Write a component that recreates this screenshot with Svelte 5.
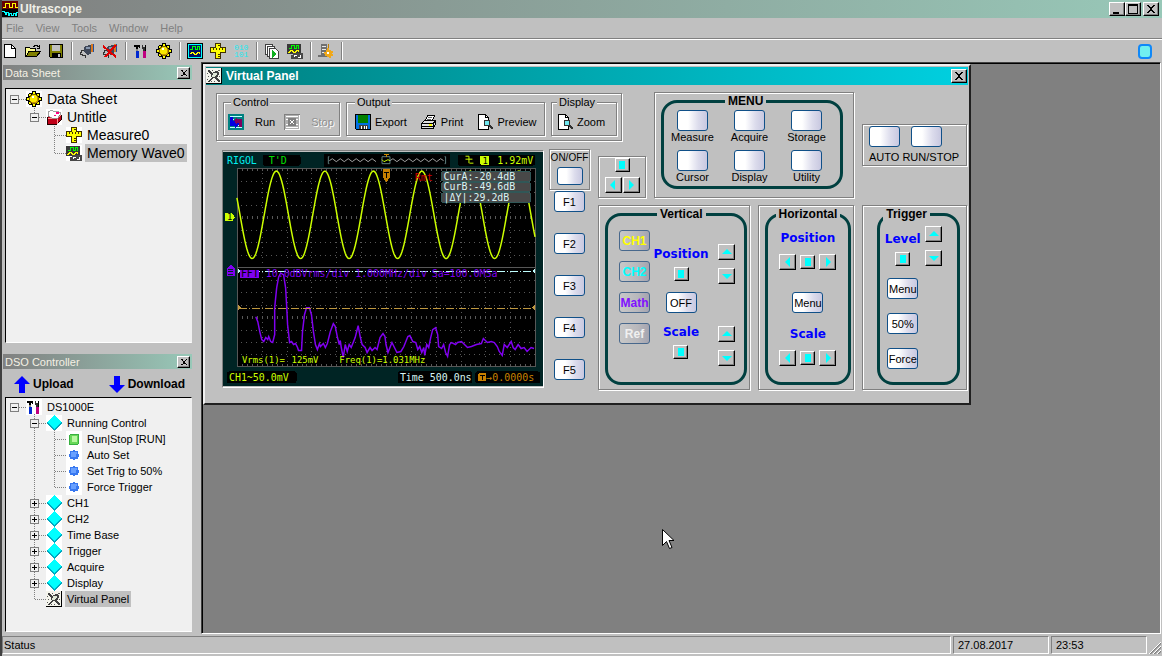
<script>
	const menus = ['File', 'View', 'Tools', 'Window', 'Help'];

	const toolGroups = [
		['new', 'open', 'save'],
		['connect', 'disconnect'],
		['tools', 'sun'],
		['wave', 'ruler', 'binary'],
		['copies', 'memory'],
		['config']
	];

	// guide holds one character per tree column, the last one is the junction
	const dataTree = [
		{ guide: 'o', box: '-', icon: 'sun', label: 'Data Sheet' },
		{ guide: ' └', box: '-', icon: 'book', label: 'Untitle' },
		{ guide: '  ├', icon: 'ruler', label: 'Measure0' },
		{ guide: '  └', icon: 'memory', label: 'Memory Wave0', selected: true }
	];

	const controlTree = [
		{ guide: 'o', box: '-', icon: 'tools', label: 'DS1000E' },
		{ guide: ' ├', box: '-', icon: 'diamond', label: 'Running Control' },
		{ guide: ' │├', icon: 'run', label: 'Run|Stop [RUN]' },
		{ guide: ' │├', icon: 'dot', label: 'Auto Set' },
		{ guide: ' │├', icon: 'dot', label: 'Set Trig to 50%' },
		{ guide: ' │└', icon: 'dot', label: 'Force Trigger' },
		{ guide: ' ├', box: '+', icon: 'diamond', label: 'CH1' },
		{ guide: ' ├', box: '+', icon: 'diamond', label: 'CH2' },
		{ guide: ' ├', box: '+', icon: 'diamond', label: 'Time Base' },
		{ guide: ' ├', box: '+', icon: 'diamond', label: 'Trigger' },
		{ guide: ' ├', box: '+', icon: 'diamond', label: 'Acquire' },
		{ guide: ' ├', box: '+', icon: 'diamond', label: 'Display' },
		{ guide: ' └', icon: 'panel', label: 'Virtual Panel', selected: true }
	];

	const menuKeys = ['Measure', 'Acquire', 'Storage', 'Cursor', 'Display', 'Utility'];
	const channels = [
		{ label: 'CH1', kind: 'ch1' },
		{ label: 'CH2', kind: 'ch2' },
		{ label: 'Math', kind: 'math' },
		{ label: 'Ref', kind: 'ref' }
	];
	const cursors = ['CurA:-20.4dB', 'CurB:-49.6dB', '|ΔY|:29.2dB'];

	const rows = [1, 2, 3, 5, 6, 7, 9, 10, 11, 13, 14, 15].map((n) => 16 + n * 12.5);
	const cols = Array.from({ length: 11 }, (_, i) => 14 + (i + 1) * 25);

	let sine = '';
	for (let x = 14; x <= 314; x++) {
		const y = 63.5 - 44 * Math.cos((2 * Math.PI * (x - 53.7)) / 48.8);
		sine += `${x},${y.toFixed(1)} `;
	}

	const fft =
		'33,166 35,171 37,181 39,189 41,191 43,187 45,189 46,186 48,191 50,192 52,184 52,157 54,137 56,126 58,122 61,124 63,137 64,154 65,174 67,192 69,191 71,194 73,193 75,197 76,200 79,200 80,181 82,164 84,157 87,157 89,164 91,181 93,194 95,199 97,193 98,196 101,193 103,197 105,193 108,181 111,173 113,176 115,186 117,194 118,190 119,197 121,207 123,194 125,201 127,194 129,197 133,187 135,179 136,175 138,186 140,194 143,197 145,202 148,197 150,200 153,197 155,199 158,187 161,183 163,186 164,194 166,202 170,192 172,196 175,202 179,201 182,196 184,191 186,186 188,185 191,191 194,192 196,199 198,196 200,202 202,197 203,205 205,194 207,197 209,187 211,179 214,177 216,184 217,196 220,198 222,194 224,202 226,206 228,194 230,192 234,194 236,192 240,191 243,194 246,197 250,196 255,194 260,193 262,188 266,192 270,191 273,192 276,196 278,201 281,205 283,194 286,197 290,191 292,197 294,199 297,194 300,198 303,197 306,201 310,197 313,198';
</script>

{#snippet icon(name)}
	<svg class="icon" viewBox="0 0 16 16" aria-hidden="true">
		{#if name === 'app'}
			<rect width="16" height="8" fill="#600" />
			<rect y="8" width="16" height="8" fill="#000" />
			<path d="M1 6.500h2v-4h4v4h3v-4h3v4h3" fill="none" stroke="#ff0" />
			<path d="M0 10.500h2v1h1v2h1v-2h2v3h1v-2h2v2h2v-2h2v2h1v-3h2" fill="none" stroke="#0ff" />
		{:else if name === 'new'}
			<path d="M2.500 1.500h7l4 4v9h-11z" fill="#fff" stroke="#000" />
			<path d="M9.500 1.500v4h4" fill="none" stroke="#000" />
		{:else if name === 'open'}
			<path d="M0.500 13.500v-9h4l1 1h5v3" fill="#ffff90" stroke="#000" />
			<path d="M1 13.500l3-5h11.500l-4 5z" fill="#808000" stroke="#000" />
			<path d="M8 3.500h1v-1h3v1h2v1M14.500 2v4M12 5.500h3" fill="none" stroke="#000" />
		{:else if name === 'save'}
			<path d="M1.500 1.500h13v13h-12l-1-1z" fill="#808000" stroke="#000" />
			<rect x="4" y="2" width="8" height="6" fill="#c0c0c0" />
			<rect x="4" y="10" width="9" height="4" fill="#000" />
			<rect x="10" y="11" width="2" height="3" fill="#c0c0c0" />
		{:else if name === 'connect' || name === 'disconnect'}
			<path d="M5 4l5-2h2v9l-4 1-3-3z" fill="#404858" />
			<path d="M7 4h4v2h-4z" fill="#8898b0" />
			<rect x="12" y="1" width="2" height="8" fill="#d87820" />
			<rect x="14" y="1" width="1" height="8" fill="#2050a0" />
			<path d="M5 7.500h-3v2h-1v2h2v1h3v2" fill="none" stroke="#333" />
			{#if name === 'disconnect'}
				<path d="M1 3l13 11M14 2L3 14" stroke="#e00000" stroke-width="2" />
			{/if}
		{:else if name === 'tools'}
			<path d="M1 4v-2h6v3h-1v-1h-1v3h-2v-3z" fill="#000" />
			<rect x="3" y="6" width="2" height="3" fill="#888" />
			<rect x="3" y="8" width="3" height="7" fill="#0028d0" />
			<path d="M9 2h1v2h2v-2h1v3l-1 2v2h-2v-2l-1-2z" fill="#303030" />
			<rect x="10" y="8" width="3" height="7" fill="#c00080" />
			<rect x="12" y="2" width="1" height="6" fill="#000" />
		{:else if name === 'sun'}
			<path d="M6 0h4v2h3l1 1v3h2v4h-2v3l-1 1h-3v2h-4v-2h-3l-1-1v-3h-2v-4h2v-3l1-1h3z" fill="#000" />
			<path
				d="M7 1h2v3h-2zM7 12h2v3h-2zM1 7h3v2h-3zM12 7h3v2h-3zM3 3h2v2h-2zM11 3h2v2h-2zM3 11h2v2h-2zM11 11h2v2h-2z"
				fill="#ff0"
			/>
			<circle cx="8" cy="8" r="4.500" fill="#f8e800" stroke="#806000" />
			<path d="M5 11h5v-1h1v-4h1v4l-2 2h-4z" fill="#c89800" />
			<rect x="6" y="5" width="2" height="2" fill="#fff" />
		{:else if name === 'wave'}
			<rect x="0.500" y="0.500" width="15" height="15" fill="#0ff" stroke="#000" />
			<rect x="2" y="2" width="12" height="12" fill="#001060" />
			<path d="M3 6.500h2v-3h3v3h2v-3h2v3h1" fill="none" stroke="#0f0" />
			<path d="M3 10.500h1v-1h2v1h1v1h2v-1h1v-1h2v1h1" fill="none" stroke="#ff0" />
		{:else if name === 'ruler'}
			<path d="M5 0h6v4h5v6h-5v6h-6v-6h-5v-6h5z" fill="#403000" />
			<path d="M6 1h4v4h5v4h-5v6h-4v-6h-5v-4h5z" fill="#ff0" />
			<path d="M3.500 5v2M6.500 5v2M9.500 5v2M12.500 5v2M8 2.500h2M8 11.500h2M8 13.500h2" stroke="#403000" />
		{:else if name === 'binary'}
			<g class="bits">
				<text x="1" y="7">010</text>
				<text x="1" y="14">101</text>
			</g>
		{:else if name === 'copies'}
			<path d="M1.500 1.500h7v10h-7z" fill="#fff" stroke="#404040" />
			<path d="M3.500 3.500h7v10h-7z" fill="#fff" stroke="#404040" />
			<path d="M5.500 5.500h6l3 3v7h-9z" fill="#fff" stroke="#404040" />
			<path d="M8 7l5 4-5 4z" fill="#10b020" />
		{:else if name === 'memory'}
			<rect x="0" y="1" width="14" height="10" fill="#383838" />
			<path d="M2 5.500h2v-3h3v3h2v-3h2v3h1" fill="none" stroke="#0f0" />
			<path d="M1 9.500h1v-1h1v-1h2v1h1v1h2v-1h1v-1h2v1h1" fill="none" stroke="#ff0" />
			<path d="M6 10h10v6H4v-4h2z" fill="#484848" />
			<path d="M7.500 14v-2h2M11 14.500h2v-3" fill="none" stroke="#fff" />
		{:else if name === 'config'}
			<path d="M3 1h6v11h-6z" fill="#707070" />
			<path d="M4 3.500h4M4 6.500h4M4 9.500h3" stroke="#e8e8e8" />
			<path d="M0 12h9v2h-9z" fill="#707070" />
			<path d="M9 5h2v2h2v1h2v2h-1v1h1v2h-2v2h-2v-1h-2v-1h-2v-2h-1v-2h2v-2h1z" fill="#f0a818" />
			<rect x="9" y="9" width="2" height="2" fill="#fff" />
			<path d="M10.500 1v4" stroke="#c08000" />
		{:else if name === 'book'}
			<path d="M1 9l3-3h11v5l-4 4h-10z" fill="#c00018" stroke="#200" />
			<path d="M2 9.500h9l4-3M11.500 10v5" stroke="#ff9090" fill="none" />
			<path d="M2 3l4-2 2 2 3-1 4 2-3 5h-6l-4-2z" fill="#fff" stroke="#888" stroke-width="0.800" />
			<path d="M10 3h3v2h-3zM8 6h2v1h-2z" fill="#ff0080" />
		{:else if name === 'diamond'}
			<path d="M8 0l8 8-8 8-8-8z" fill="#00a8c0" />
			<path d="M8 0l7 7-7 7-7-7z" fill="#0ff" />
		{:else if name === 'run'}
			<rect x="3" y="3" width="10" height="11" rx="2" fill="#38b040" />
			<rect x="4" y="4" width="8" height="9" rx="1" fill="#68d858" />
			<rect x="6" y="5" width="5" height="6" fill="#b8f8a0" />
		{:else if name === 'dot'}
			<path d="M7 3h2v1h3v3h1v3h-1v2h-3v1h-2v-1h-3v-2h-1v-3h1v-3h3z" fill="#3878f0" />
			<path d="M5 5h6v2h-1v3h-5z" fill="#68a0ff" />
		{:else if name === 'panel'}
			<rect width="16" height="16" fill="#f4f4ec" />
			<path d="M0 15.500h15.500v-15.500" fill="none" stroke="#000" />
			<path
				d="M2 2h2v1h1v1h1v1h1v-1h2v-1h3v1h1v3h-1v2h-1v1h1v1h1v1h1v2h-2v-1h-1v-1h-1v-1h-1v-1h-2v1h-1v1h-1v1h-1v1h-2v-1h1v-1h1v-1h1v-1h1v-1h-1v-3h-1v-1h-1v-1h-1z"
				fill="#404040"
			/>
			<path d="M6 7h1v-2h4v2h-1v1h-1v1h-3z" fill="#e0e8d8" />
			<path d="M12 2.500h2M2 8.500h1M1 11.500h1M13 8.500h1M5 13.500h1M8 13.500h1M6 2.500h1M1 5.500h1" stroke="#585858" />
		{:else if name === 'start'}
			<rect width="16" height="16" fill="#008080" />
			<path d="M2 2.500h12M2 5.500h4M2 13.500h12M9 11.500h5" stroke="#c0ffff" />
			<path d="M2 3h3v4h2v-2l4 5-4 4v-2h-5z" fill="#0000e0" />
			<path d="M14 13h-3v-4h-2v2l-3-5 3-3v2h5z" fill="#800060" />
		{:else if name === 'stop'}
			<rect x="0.500" y="0.500" width="15" height="15" fill="#b0b0b0" stroke="#808080" />
			<path d="M2 2.500h12M2 5.500h12M2 10.500h12M2 13.500h12M15.500 1v15M1 15.500h15" stroke="#fff" />
			<rect x="4" y="4" width="8" height="8" fill="#808080" />
			<path d="M6 6h1v1h2v-1h1v1h-1v2h1v1h-1v-1h-2v1h-1v-1h1v-2h-1z" fill="#fff" />
		{:else if name === 'export'}
			<path d="M0.500 0.500h15v15h-14l-1-1z" fill="#0070e0" stroke="#000" />
			<rect x="3" y="1" width="10" height="8" fill="#008000" />
			<rect x="4" y="11" width="9" height="4" fill="#404040" />
			<path d="M6.500 12v3M9.500 12v3M11.500 12v3" stroke="#fff" />
		{:else if name === 'print'}
			<path d="M4.500 6.500l2-5h7l-2 5z" fill="#fff" stroke="#000" />
			<path d="M7 3.500h4M6 5.500h4" stroke="#606060" />
			<path d="M0.500 9.500l3-3h11v4l-3 4h-11z" fill="#e0e0e0" stroke="#000" />
			<path d="M1 9.500h11v5M12 9.500l3-3M1 12.500h11" fill="none" stroke="#000" />
			<rect x="8" y="10" width="3" height="2" fill="#ff0" />
		{:else if name === 'preview'}
			<path d="M1.500 0.500h7l3 3v12h-10z" fill="#fff" stroke="#000" />
			<path d="M8.500 0.500v3h3" fill="none" stroke="#000" />
			<circle cx="10" cy="9" r="3" fill="#70e8f0" stroke="#303030" />
			<path d="M12 11l4 4" stroke="#303030" stroke-width="2" />
		{:else if name === 'close'}
			<path d="M4 4h2v1h1v1h2v-1h1v-1h2v1h-1v1h-1v1h-1v2h1v1h1v1h1v1h-2v-1h-1v-1h-2v1h-1v1h-2v-1h1v-1h1v-1h1v-2h-1v-1h-1v-1h-1z" />
		{:else if name === 'max'}
			<path d="M3 3h10v10h-10zM4 5v7h8v-7z" fill-rule="evenodd" />
		{:else if name === 'min'}
			<path d="M4 11h6v2h-6z" />
		{/if}
	</svg>
{/snippet}

{#snippet tree(items, size)}
	<ul class="tree {size}">
		{#each items as item (item.label)}
			<li>
				{#each item.guide as cell, i}
					<svg class="guide" viewBox="0 0 20 18" aria-hidden="true">
						{#if cell === '│' || cell === '├'}<path class="dots" d="M8.500 0v18" />{/if}
						{#if cell === '└'}<path class="dots" d="M8.500 0v9" />{/if}
						{#if cell !== ' ' && cell !== '│'}<path class="dots" d="M9 9.500h11" />{/if}
						{#if item.box && i === item.guide.length - 1}
							<rect x="4.500" y="5.500" width="8" height="8" fill="#f0f0f0" stroke="#808080" />
							<path d="M6 9.500h5" stroke="#000" />
							{#if item.box === '+'}<path d="M8.500 7v5" stroke="#000" />{/if}
						{/if}
					</svg>
				{/each}
				<span class="tree-icon">{@render icon(item.icon)}</span>
				<button class="node" class:selected={item.selected}>{item.label}</button>
			</li>
		{/each}
	</ul>
{/snippet}

{#snippet arrow(dir)}
	<button class="arrow" class:square={dir === 'square'} aria-label={dir}>
		<svg viewBox="0 0 10 10" aria-hidden="true">
			{#if dir === 'up'}<path d="M0 7h10L5 2z" />
			{:else if dir === 'down'}<path d="M0 3h10L5 8z" />
			{:else if dir === 'left'}<path d="M7 0v10L2 5z" />
			{:else if dir === 'right'}<path d="M3 0v10l5-5z" />
			{:else}<path d="M2 1h6v8H2z" />{/if}
		</svg>
	</button>
{/snippet}

{#snippet dockHead(title)}
	<header class="dock-head">
		<span>{title}</span>
		<button class="win-btn small" aria-label="Close">{@render icon('close')}</button>
	</header>
{/snippet}

<div class="app">
	<header class="titlebar">
		{@render icon('app')}
		<span class="title">Ultrascope</span>
		<div class="win-btns">
			<button class="win-btn" aria-label="Minimize">{@render icon('min')}</button>
			<button class="win-btn" aria-label="Maximize">{@render icon('max')}</button>
		</div>
		<button class="win-btn" aria-label="Close">{@render icon('close')}</button>
	</header>

	<nav class="menubar">
		{#each menus as menu}
			<button disabled>{menu}</button>
		{/each}
	</nav>

	<div class="toolbar">
		{#each toolGroups as group}
			{#each group as tool}
				<button aria-label={tool}>{@render icon(tool)}</button>
			{/each}
			<span class="sep"></span>
		{/each}
		<span class="lamp"></span>
	</div>

	<main>
		<aside>
			<section class="dock">
				{@render dockHead('Data Sheet')}
				<div class="dock-gap"></div>
				{@render tree(dataTree, 'large')}
			</section>
			<section class="dock">
				{@render dockHead('DSO Controller')}
				<div class="transfer">
					<button>
						<svg viewBox="0 0 16 17" aria-hidden="true"><path d="M8 0l8 8h-5v9H5V8H0z" /></svg>
						Upload
					</button>
					<button>
						<svg viewBox="0 0 16 17" aria-hidden="true"><path d="M8 17l8-8h-5V0H5v9H0z" /></svg>
						Download
					</button>
				</div>
				{@render tree(controlTree, 'compact')}
			</section>
		</aside>

		<div class="mdi">
			<section class="window">
				<header class="window-title">
					{@render icon('panel')}
					<span class="title">Virtual Panel</span>
					<button class="win-btn" aria-label="Close">{@render icon('close')}</button>
				</header>

				<div class="panel">
					<div class="frame actions">
						<fieldset class="control">
							<legend>Control</legend>
							<button class="wide">{@render icon('start')}Run</button>
							<button class="wide" disabled>{@render icon('stop')}Stop</button>
						</fieldset>
						<fieldset class="output">
							<legend>Output</legend>
							<button>{@render icon('export')}Export</button>
							<button>{@render icon('print')}Print</button>
							<button>{@render icon('preview')}Preview</button>
						</fieldset>
						<fieldset class="display">
							<legend>Display</legend>
							<button>{@render icon('preview')}Zoom</button>
						</fieldset>
					</div>

					<div class="scope">
						<svg class="screen" viewBox="0 0 322 236" role="img" aria-label="Oscilloscope screen">
							<rect width="322" height="236" fill="#002424" />
							<rect x="40" y="3" width="38" height="11" rx="2" />
							<rect x="102" y="2" width="126" height="13" />
							<rect x="236" y="3" width="78" height="11" rx="2" />
							<rect x="4" y="221" width="70" height="12" rx="2" />
							<rect x="176" y="221" width="75" height="12" rx="2" />
							<rect x="254" y="221" width="65" height="12" rx="2" />

							<rect x="14.500" y="16.500" width="300" height="200" stroke="#585858" />
							<g stroke="#585858">
								{#each rows as y}
									<path d="M18 {Math.round(y) + 0.5}H314" stroke-dasharray="1 4" />
								{/each}
								{#each cols as x}
									<path d="M{x + 0.5} 16V216" stroke-dasharray="1 4" />
								{/each}
								<path d="M14 116.500H314" />
								<path d="M19 66.500H314M19 166.500H314" stroke-width="3" stroke-dasharray="1 4" />
								<path d="M19 18H314M19 215H314" stroke-dasharray="1 4" stroke-width="2" />
							</g>

							<polyline points={sine} class="trace" />
							<polyline points={fft} class="trace spectrum" />

							<path d="M16 120.500H313" stroke="#c0ffff" stroke-dasharray="8 2 1 2" />
							<path d="M16 157.500H313" stroke="#c09840" stroke-dasharray="8 2 1 2" />
							<path d="M15 117l3 3-3 3zM314 117l-3 3 3 3z" fill="#c0ffff" />
							<path d="M15 154l3 3-3 3zM314 154l-3 3 3 3z" fill="#c09840" />

							<text x="4" y="12" fill="#00f0f0">RIGOL</text>
							<text x="46" y="12" fill="#00e000">T'D</text>
							<path d="M107 5h-1v7h1M223 5h1v7h-1" class="thin" stroke="#608080" />
							<path
								d="M107 9l3-2 4 3 4-3 4 3 4-3 4 3 4-3 4 3 4-3 4 3 4-3 4 3M168 9l3-2 4 3 4-3 4 3 4-3 4 3 4-3 4 3 4-3 4 3 4-3 4 3 4-3 3 2"
								class="thin"
								stroke="#a0a0a0"
							/>
							<path d="M160 5h8v7h-8z" class="thin" stroke="#608080" />
							<path d="M160 8l2 2 4-2 2 1" class="thin" stroke="#cf0" />
							<path d="M162 2.500h5M164.500 2v3" stroke="#c80" />
							<path d="M244 4.500h3.500v7M244 7.500h7M248 11.500h4" class="thin" stroke="#cf0" />
							<rect x="259" y="4" width="9" height="9" rx="1" fill="#cf0" />
							<text x="261" y="12" class="small" fill="#000">1</text>
							<text x="276" y="12" fill="#cf0">1.92mV</text>

							<path d="M161 17h7v9l-3 4h-1l-3-4z" fill="#c88000" />
							<path d="M162 20.500h5M164.500 20v6" stroke="#000" />
							<text x="193" y="29" fill="#d00000">Rmt</text>
							{#each cursors as line, i}
								<rect x="219.500" y={19.5 + i * 11} width="90" height="10" rx="2" fill="#484848" stroke="#305858" />
								<text x="222" y={28 + i * 11} fill="#d8f4f4">{line}</text>
							{/each}

							<path d="M2 62h7l3 4-3 4H2z" fill="#cf0" />
							<text x="4" y="69" class="small" fill="#000">1</text>
							<path d="M4 125v-7l4-5 4 5v7z" fill="#8000f0" />
							<path d="M5 118.500h5M5 120.500h5M5 123.500h5" stroke="#002424" />

							<rect x="17" y="119" width="19" height="8" fill="#8000f0" />
							<text x="18" y="126" fill="#000">FFT</text>
							<g fill="#8000f0">
								<text x="43" y="126">10.0dBVrms/div</text>
								<text x="133" y="126">1.000MHz/div</text>
								<text x="210" y="126">Sa=100.0MSa</text>
							</g>
							<g class="small" fill="#cf0">
								<text x="19" y="213">Vrms(1)=</text>
								<text x="69" y="213">125mV</text>
								<text x="117" y="213">Freq(1)=1.031MHz</text>
							</g>
							<text x="6" y="231" fill="#cf0">CH1~50.0mV</text>
							<text x="178" y="231" fill="#d8f4f4">Time 500.0ns</text>
							<rect x="257" y="223" width="8" height="8" rx="1" fill="#c88000" />
							<path d="M259 225.500h5M261.500 225v5" stroke="#000" />
							<text x="265" y="231" fill="#c88000">→0.0000s</text>
						</svg>

						<div class="keys">
							<div class="frame onoff">
								ON/OFF
								<button class="key mini" aria-label="ON/OFF"></button>
							</div>
							<div class="fkeys">
								{#each ['F1', 'F2', 'F3', 'F4', 'F5'] as key}
									<button class="key">{key}</button>
								{/each}
							</div>
						</div>
					</div>

					<div class="frame pad">
						{@render arrow('square')}
						<div>{@render arrow('left')}{@render arrow('right')}</div>
					</div>

					<div class="frame group menu">
						<fieldset class="round">
							<legend>MENU</legend>
							{#each menuKeys as key}
								<label><button class="key"></button>{key}</label>
							{/each}
						</fieldset>
					</div>

					<div class="frame auto">
						<div>
							<button class="key" aria-label="AUTO"></button>
							<button class="key" aria-label="RUN/STOP"></button>
						</div>
						<span>AUTO RUN/STOP</span>
					</div>

					<div class="controls">
						<div class="frame group vertical">
							<fieldset class="round">
								<legend>Vertical</legend>
								<div class="channels">
									{#each channels as ch}
										<button class="key channel {ch.kind}">{ch.label}</button>
									{/each}
								</div>
								<div class="knobs">
									<div class="knob"><b>Position</b>{@render arrow('square')}</div>
									<button class="key">OFF</button>
									<div class="knob"><b>Scale</b>{@render arrow('square')}</div>
								</div>
								<div class="spinners">
									<div class="spinner">{@render arrow('up')}{@render arrow('down')}</div>
									<div class="spinner">{@render arrow('up')}{@render arrow('down')}</div>
								</div>
							</fieldset>
						</div>

						<div class="frame group horizontal">
							<fieldset class="round">
								<legend>Horizontal</legend>
								<b>Position</b>
								<div class="slider">{@render arrow('left')}{@render arrow('square')}{@render arrow('right')}</div>
								<button class="key">Menu</button>
								<b>Scale</b>
								<div class="slider">{@render arrow('left')}{@render arrow('square')}{@render arrow('right')}</div>
							</fieldset>
						</div>

						<div class="frame group trigger">
							<fieldset class="round">
								<legend>Trigger</legend>
								<div class="level">
									<div class="knob"><b>Level</b>{@render arrow('square')}</div>
									<div class="spinner">{@render arrow('up')}{@render arrow('down')}</div>
								</div>
								<div class="trigger-keys">
									<button class="key">Menu</button>
									<button class="key">50%</button>
									<button class="key">Force</button>
								</div>
							</fieldset>
						</div>
					</div>
				</div>
			</section>

			<svg class="pointer" viewBox="0 0 13 21" aria-hidden="true">
				<path d="M0.500 0.500v16l4-4 3 7 2.500-1-3-7h5z" fill="#fff" stroke="#000" />
			</svg>
		</div>
	</main>

	<footer class="statusbar">
		<span class="status">Status</span>
		<span class="cell">27.08.2017</span>
		<span class="cell">23:53</span>
		<svg class="grip" viewBox="0 0 12 12" aria-hidden="true">
			<path d="M1 12L12 1M5 12l7-7M9 12l3-3" stroke="#808080" stroke-width="1.500" />
			<path d="M0 12L12 0M4 12l8-8M8 12l4-4" stroke="#fff" />
		</svg>
	</footer>
</div>

<style>
	:global(body) {
		background: #c0c0c0;
	}

	.app {
		display: flex;
		flex-direction: column;
		height: 100vh;
		box-sizing: border-box;
		border-left: 2px solid #404040;
		background: #c0c0c0;
		color: #000;
		font: 11px/12px 'Liberation Sans', Arial, sans-serif;
		cursor: default;
	}

	button {
		margin: 0;
		padding: 0;
		border: none;
		background: none;
		color: inherit;
		font: inherit;
		white-space: nowrap;
	}

	fieldset {
		min-width: 0;
		margin: 0;
		padding: 0;
		border: none;
	}

	.icon {
		display: block;
		flex: none;
		width: 16px;
		height: 16px;
		overflow: visible;
		shape-rendering: crispEdges;
	}

	.bits {
		fill: #20e8f0;
		font: 8px 'Liberation Mono', monospace;
	}

	.titlebar,
	.window-title {
		display: flex;
		flex: none;
		align-items: center;
		height: 18px;
		gap: 4px;
		color: #fff;
		font-size: 12px;
		font-weight: bold;
	}

	.titlebar {
		padding-right: 3px;
		background: linear-gradient(to right, #808080, #98c8b8);
		color: #f0f0e8;
		gap: 2px;
	}

	.title {
		flex: 1;
	}

	.win-btns {
		display: flex;
	}

	.win-btn {
		display: flex;
		align-items: center;
		justify-content: center;
		width: 16px;
		height: 14px;
		box-sizing: border-box;
		border: 1px solid;
		border-color: #fff #000 #000 #fff;
		background: #c0c0c0;
		box-shadow: inset -1px -1px #808080;
	}

	.win-btn.small {
		width: 13px;
		height: 12px;
	}

	.win-btn.small .icon {
		width: 12px;
		height: 12px;
	}

	.menubar {
		display: flex;
		flex: none;
		align-items: center;
		height: 20px;
		gap: 12px;
		padding-left: 4px;
		border-bottom: 1px solid #808080;
		box-shadow: 0 1px #fff;
		color: #808080;
	}

	.toolbar {
		display: flex;
		flex: none;
		align-items: center;
		height: 22px;
		padding: 1px 10px 0 0;
		gap: 7px;
	}

	.sep {
		width: 1px;
		height: 18px;
		background: #808080;
		box-shadow: 1px 0 #fff;
	}

	.lamp {
		width: 10px;
		height: 11px;
		margin-left: auto;
		border: 2px solid #1088f8;
		border-radius: 4px;
		background: #70f0f0;
	}

	main {
		display: flex;
		flex: 1;
		min-height: 0;
	}

	aside {
		display: flex;
		flex-direction: column;
		width: 199px;
		box-sizing: border-box;
		gap: 11px;
		padding: 3px 9px 2px 1px;
	}

	.dock {
		display: flex;
		flex: 1;
		flex-direction: column;
		min-height: 0;
	}

	.dock-head {
		display: flex;
		align-items: center;
		justify-content: space-between;
		height: 15px;
		padding: 0 2px;
		background: linear-gradient(to right, #808080, #98c8b8);
		color: #f4f0e4;
	}

	.dock-gap {
		height: 8px;
	}

	.transfer {
		display: flex;
		align-items: center;
		height: 28px;
		box-sizing: border-box;
		padding: 2px 0 0 11px;
		gap: 35px;
		font-size: 12px;
		font-weight: bold;
	}

	.transfer button {
		display: flex;
		align-items: center;
		gap: 3px;
	}

	.transfer svg {
		width: 16px;
		height: 17px;
		fill: #00f;
	}

	.tree {
		flex: 1;
		min-height: 0;
		margin: 0 0 0 2px;
		padding: 1px 0 0;
		border: 1px solid;
		border-color: #000 #f0f0f0 #fff #000;
		background: #f0f0f0;
		list-style: none;
		overflow: hidden;
	}

	.tree li {
		display: flex;
		align-items: center;
		height: 16px;
	}

	.large li {
		height: 18px;
	}

	.guide {
		flex: none;
		width: 20px;
		height: 18px;
		shape-rendering: crispEdges;
	}

	.dots {
		fill: none;
		stroke: #808080;
		stroke-dasharray: 1 1;
	}

	.tree-icon {
		margin-right: 3px;
		background: #fff;
	}

	.node {
		height: 16px;
		padding: 0 2px;
	}

	.large .node {
		height: 18px;
		font-size: 14px;
	}

	.node.selected {
		background: #c0c0c0;
	}

	.mdi {
		position: relative;
		flex: 1;
		min-width: 0;
		margin-right: 1px;
		border: 1px solid;
		border-color: #404040 #fff #fff #404040;
		background: #808080;
		box-shadow: inset 1px 1px #000;
		overflow: hidden;
	}

	.window {
		width: 764px;
		margin: 1px;
		padding-top: 1px;
		border: 2px solid;
		border-color: #f0f0f0 #202020 #202020 #f0f0f0;
		background: #c0c0c0;
	}

	.window-title {
		margin: 0 1px;
		padding-right: 1px;
		background: linear-gradient(to right, #008080, #00d0e0);
	}

	.panel {
		display: grid;
		grid-template-columns: 374px 48px 200px 105px;
		grid-template-rows: 50px 49px 185px;
		gap: 7px 8px;
		padding: 7px 0 13px 11px;
	}

	.frame {
		box-sizing: border-box;
		border: 1px solid #808080;
		box-shadow: 1px 1px #fff, inset 1px 1px #fff;
	}

	.actions {
		display: flex;
		grid-area: 1 / 1 / 2 / 3;
		justify-self: start;
		width: 406px;
		height: 48px;
		margin-top: 1px;
		padding: 2px 4px 4px 6px;
		gap: 6px;
	}

	.actions fieldset {
		display: flex;
		align-items: center;
		box-sizing: border-box;
		border: 1px solid #808080;
		box-shadow: 1px 1px #fff, inset 1px 1px #fff;
	}

	.actions .control {
		width: 117px;
		padding: 0 4px;
		gap: 9px;
	}

	.actions .output {
		flex: 1;
		padding: 0 2px 0 8px;
		gap: 14px;
	}

	.actions .display {
		width: 66px;
		padding: 0 5px;
	}

	.actions legend {
		margin-left: 3px;
		padding: 0 2px;
		background: #c0c0c0;
	}

	.actions .output legend,
	.actions .display legend {
		margin-left: 0;
	}

	.actions button {
		display: flex;
		align-items: center;
		gap: 4px;
	}

	.actions .wide {
		gap: 11px;
	}

	.actions button:disabled {
		color: #909090;
		text-shadow: 1px 1px #fff;
	}

	.scope {
		display: flex;
		grid-area: 2 / 1 / 4 / 2;
		padding-left: 6px;
		gap: 5px;
	}

	.screen {
		width: 322px;
		height: 236px;
		margin-top: 1px;
		border: 1px solid;
		border-color: #808080 #fff #fff #808080;
		font: 10px 'DejaVu Sans Mono', monospace;
		shape-rendering: crispEdges;
	}

	.screen .small {
		font-size: 9px;
	}

	.thin,
	.trace {
		fill: none;
		shape-rendering: auto;
	}

	.trace {
		stroke: #cf0;
		stroke-width: 1.500;
	}

	.trace.spectrum {
		stroke: #8000f0;
	}

	.keys {
		display: flex;
		flex-direction: column;
		align-items: center;
		width: 41px;
	}

	.onoff {
		display: flex;
		flex-direction: column;
		align-items: center;
		width: 41px;
		height: 41px;
		padding-top: 2px;
		gap: 3px;
		font-size: 10px;
	}

	.fkeys {
		display: flex;
		flex-direction: column;
		margin-top: 1px;
		gap: 21px;
	}

	.key {
		flex: none;
		width: 31px;
		height: 21px;
		border: 1px solid #105088;
		border-radius: 3px;
		background: linear-gradient(to right, #fff 35%, #dcdcec 70%, #c8c8e0);
	}

	.key.mini {
		width: 26px;
		height: 18px;
	}

	.channel {
		border-color: #48688c;
		background: linear-gradient(to right, #c8c8c8, #b8b8bc 60%, #a4a4b0);
		font-size: 12px;
		font-weight: bold;
	}

	.ch1 {
		color: #ff0;
	}

	.ch2 {
		color: #0ff;
	}

	.math {
		color: #8010ff;
	}

	.ref {
		color: #f0f0f0;
	}

	.arrow {
		display: flex;
		flex: none;
		align-items: center;
		justify-content: center;
		width: 17px;
		height: 16px;
		border: 1px solid;
		border-color: #fff #000 #000 #fff;
		background: #c0c0c0;
		box-shadow: inset -1px -1px #808080;
	}

	.arrow.square {
		width: 15px;
		height: 14px;
	}

	.arrow svg {
		flex: none;
		width: 10px;
		height: 10px;
		fill: #0ff;
	}

	.pad {
		display: flex;
		grid-area: 2 / 2 / 3 / 3;
		flex-direction: column;
		align-items: center;
		align-self: end;
		height: 42px;
		padding-top: 1px;
		gap: 5px;
	}

	.pad div {
		display: flex;
		gap: 1px;
	}

	.group {
		display: flex;
		padding: 1px 6px 4px;
	}

	.round {
		flex: 1;
		border: 3px solid #004040;
		border-radius: 16px;
	}

	.round legend {
		margin: 0 auto;
		padding: 0 3px;
		font-size: 12px;
		font-weight: bold;
		line-height: 14px;
	}

	.round b {
		color: #00f;
		font: bold 12px/16px 'DejaVu Sans', sans-serif;
	}

	.menu {
		grid-area: 1 / 3 / 3 / 4;
		padding: 1px 10px 8px 6px;
	}

	.menu .round {
		display: grid;
		grid-template-columns: repeat(3, 57px);
		align-content: start;
		padding-top: 2px;
		row-gap: 7px;
	}

	.menu legend {
		margin-left: 61px;
	}

	.menu label {
		display: flex;
		flex-direction: column;
		align-items: center;
	}

	.auto {
		display: flex;
		grid-area: 1 / 4 / 3 / 5;
		flex-direction: column;
		align-self: center;
		height: 42px;
		padding: 1px 0 0 6px;
		gap: 4px;
	}

	.auto div {
		display: flex;
		gap: 11px;
	}

	.controls {
		display: flex;
		grid-area: 3 / 2 / 4 / 5;
		gap: 8px;
	}

	.vertical {
		width: 152px;
		padding-right: 2px;
	}

	.vertical .round {
		display: flex;
		align-items: flex-start;
		padding: 9px 0 0 11px;
	}

	.channels {
		display: flex;
		flex-direction: column;
		gap: 10px;
	}

	.knobs {
		display: flex;
		flex-direction: column;
		align-items: center;
		width: 62px;
		padding-top: 16px;
		gap: 11px;
	}

	.knob {
		display: flex;
		flex-direction: column;
		align-items: center;
		gap: 5px;
	}

	.spinners {
		display: flex;
		flex-direction: column;
		margin-left: 6px;
		padding-top: 14px;
		gap: 42px;
	}

	.spinner {
		display: flex;
		flex-direction: column;
		gap: 8px;
	}

	.horizontal {
		width: 97px;
		padding-right: 2px;
	}

	.horizontal .round {
		display: flex;
		flex-direction: column;
		align-items: center;
		padding-top: 9px;
	}

	.slider {
		display: flex;
		align-items: center;
		margin-top: 8px;
		gap: 4px;
	}

	.horizontal .key {
		margin: 22px 0 13px;
	}

	.trigger {
		width: 105px;
		padding: 1px 6px 4px 14px;
	}

	.trigger .round {
		padding-top: 5px;
	}

	.trigger legend {
		margin-left: 3px;
	}

	.level {
		display: flex;
		align-items: flex-end;
	}

	.level .knob,
	.trigger-keys {
		width: 45px;
	}

	.trigger-keys {
		display: flex;
		flex-direction: column;
		align-items: center;
		margin-top: 12px;
		gap: 14px;
	}

	.pointer {
		position: absolute;
		top: 466px;
		left: 460px;
		width: 13px;
		height: 21px;
	}

	.statusbar {
		display: flex;
		flex: none;
		align-items: center;
		height: 22px;
		box-sizing: border-box;
		padding: 2px 1px 2px 0;
		gap: 2px;
	}

	.statusbar span {
		box-sizing: border-box;
		height: 18px;
		padding: 2px 1px;
		border: 1px solid;
		border-color: #808080 #fff #fff #808080;
	}

	.status {
		flex: 1;
	}

	.statusbar .cell {
		width: 96px;
		padding-left: 4px;
	}

	.grip {
		align-self: flex-end;
		width: 12px;
		height: 12px;
	}
</style>
